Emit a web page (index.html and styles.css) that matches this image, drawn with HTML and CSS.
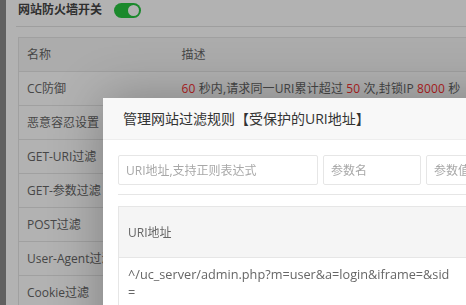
FILE: index.html
```html
<!DOCTYPE html>
<html lang="zh-CN">
<head>
<meta charset="utf-8">
<title>网站防火墙</title>
<link rel="stylesheet" href="styles.css">
</head>
<body>
<div class="app">
  <div class="edge"></div>
  <div class="main">
    <div class="switch-row">
      <span class="label">网站防火墙开关</span>
      <span class="switch"><i class="knob"></i></span>
    </div>
    <table class="rules">
      <colgroup><col class="c-name"><col></colgroup>
      <thead>
        <tr><th>名称</th><th>描述</th></tr>
      </thead>
      <tbody>
        <tr><td>CC防御</td><td class="desc"><span class="num">60</span> 秒内,请求同一URI累计超过 <span class="num">50</span> 次,封锁IP <span class="num">8000</span> 秒</td></tr>
        <tr><td>恶意容忍设置</td><td></td></tr>
        <tr><td>GET-URI过滤</td><td></td></tr>
        <tr><td>GET-参数过滤</td><td></td></tr>
        <tr><td>POST过滤</td><td></td></tr>
        <tr><td>User-Agent过滤</td><td></td></tr>
        <tr><td>Cookie过滤</td><td></td></tr>
      </tbody>
    </table>
  </div>
</div>
<div class="shade"></div>
<div class="layer">
  <div class="layer-title">管理网站过滤规则【受保护的URI地址】</div>
  <div class="layer-content">
    <div class="form-row">
      <input class="inp inp-uri" type="text" placeholder="URI地址,支持正则表达式">
      <input class="inp inp-key" type="text" placeholder="参数名">
      <input class="inp inp-val" type="text" placeholder="参数值">
    </div>
    <div class="sep"></div>
    <table class="uri-table">
      <colgroup><col class="u-uri"><col class="u-key"><col class="u-val"><col class="u-op"></colgroup>
      <thead>
        <tr><th>URI地址</th><th>参数名</th><th>参数值</th><th>操作</th></tr>
      </thead>
      <tbody>
        <tr><td class="uri">^/uc_server/admin.php?m=user&amp;a=login&amp;iframe=&amp;sid=</td><td>m</td><td>user</td><td>删除</td></tr>
      </tbody>
    </table>
  </div>
</div>
</body>
</html>
```

FILE: styles.css
```css
html, body {
  margin: 0;
  padding: 0;
  width: 466px;
  height: 305px;
  overflow: hidden;
  background: #fff;
  font-family: "Open Sans", "Noto Sans CJK SC", sans-serif;
  font-size: 12px;
  color: #666;
}

.app {
  display: flex;
  height: 305px;
}

.edge {
  width: 6px;
  flex: none;
  background: #8a8a8a;
}

.main {
  flex: 1;
  padding-left: 10px;
}

.switch-row {
  display: flex;
  align-items: center;
  height: 20px;
  padding: 0 0 6px 2px;
  border-bottom: 1px solid #e2e2e2;
}

.label {
  font-size: 12px;
  line-height: 20px;
  color: #444;
  font-weight: 600;
}

.switch {
  display: inline-flex;
  align-items: center;
  justify-content: flex-end;
  width: 27px;
  height: 15px;
  margin-left: 12px;
  padding: 0 2px;
  box-sizing: border-box;
  border-radius: 8px;
  background: #27c440;
}

.knob {
  display: block;
  width: 11px;
  height: 11px;
  border-radius: 50%;
  background: #fff;
}

.rules {
  margin: 10px 0 0 2px;
  width: 620px;
  border-collapse: collapse;
  border-top: 1px solid #e6e6e6;
  border-left: 1px solid #e6e6e6;
}

.c-name { width: 155px; }

.rules th,
.rules td {
  height: 33px;
  padding: 0 8px;
  text-align: left;
  font-weight: normal;
  line-height: 18px;
  border-bottom: 1px solid #e6e6e6;
  white-space: nowrap;
  color: #666;
}

.rules th {
  background: #f6f6f6;
  color: #666;
}

.desc {
  color: #666;
  letter-spacing: 0.12px;
}

.num { color: #ff3030; }

.shade {
  position: fixed;
  inset: 0;
  background: rgba(0, 0, 0, 0.3);
}

.layer {
  position: absolute;
  left: 103px;
  top: 98px;
  width: 560px;
  height: 320px;
  background: #fff;
  box-shadow: 1px 1px 50px rgba(0, 0, 0, 0.3);
}

.layer-title {
  height: 41px;
  line-height: 41px;
  padding: 0 80px 0 20px;
  font-size: 14px;
  color: #333;
  background: #f8f8f8;
  border-bottom: 1px solid #eee;
  white-space: nowrap;
}

.layer-content {
  padding: 15px;
}

.form-row {
  display: flex;
  gap: 5px;
}

.inp {
  height: 30px;
  box-sizing: border-box;
  padding: 0 7px;
  border: 1px solid #e6e6e6;
  border-radius: 2px;
  font-family: "Open Sans", "Noto Sans CJK SC", sans-serif;
  font-size: 12px;
  color: #666;
  background: #fff;
  outline: none;
}

.inp::placeholder { color: #a8a8a8; }

.inp-uri { width: 200px; }
.inp-key { width: 98px; }
.inp-val { width: 200px; flex: none; }

.sep {
  margin-top: 9px;
  border-top: 1px solid #e6e6e6;
}

.uri-table {
  margin-top: 11px;
  border-collapse: collapse;
  table-layout: fixed;
  width: 700px;
  border: 1px solid #e6e6e6;
}

.u-uri { width: 343px; }
.u-key { width: 100px; }
.u-val { width: 100px; }
.u-op { width: 157px; }

.uri-table th {
  height: 50px;
  padding: 0 9px;
  text-align: left;
  font-weight: normal;
  color: #666;
  background: #f5f5f5;
  border-bottom: 1px solid #e6e6e6;
}

.uri-table td {
  padding: 7px 9px;
  vertical-align: top;
  line-height: 18px;
  color: #666;
}

.uri {
  font-size: 12.7px;
  word-break: break-all;
}
```
